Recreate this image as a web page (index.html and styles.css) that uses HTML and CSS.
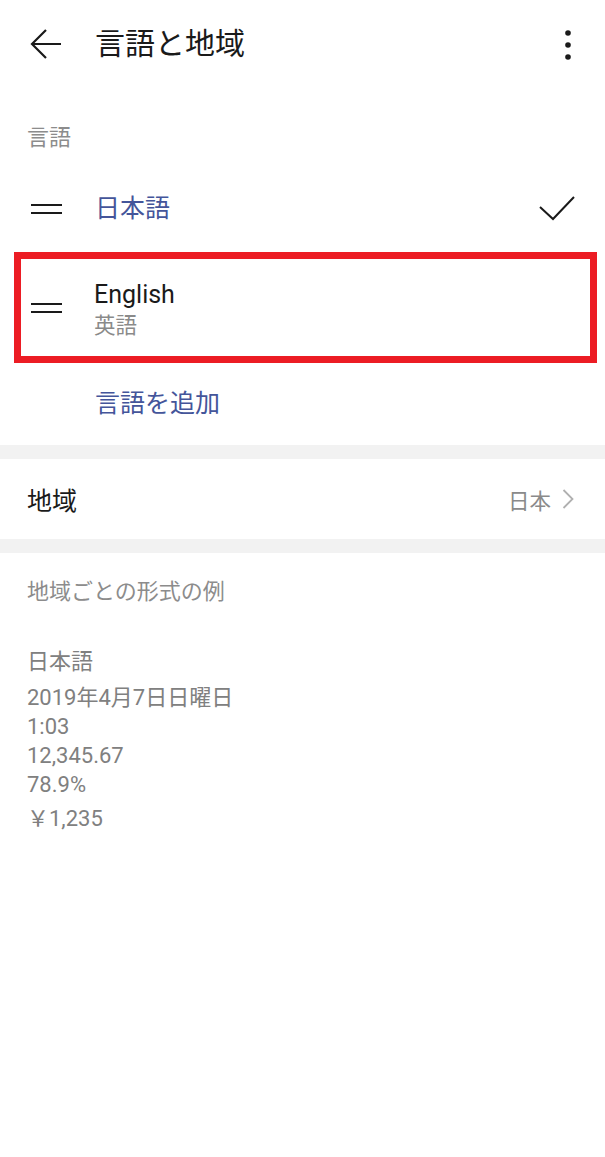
FILE: index.html
```html
<!DOCTYPE html>
<html lang="ja">
<head>
    <meta charset="UTF-8">
    <meta name="viewport" content="width=device-width, initial-scale=1.0">
    <title>言語と地域</title>
    <link rel="stylesheet" href="styles.css">
</head>
<body>
    <div class="screen">
        <!-- ヘッダー -->
        <header class="header">
            <svg class="back" width="32" height="32" viewBox="0 0 32 32">
                <path d="M16 2 L2 16 L16 30 M2 16 L31 16" fill="none" stroke="#1a1a1a" stroke-width="2.2"/>
            </svg>
            <h1>言語と地域</h1>
            <svg class="more" width="8" height="30" viewBox="0 0 8 30">
                <circle cx="4" cy="3" r="2.8" fill="#1a1a1a"/>
                <circle cx="4" cy="15" r="2.8" fill="#1a1a1a"/>
                <circle cx="4" cy="27" r="2.8" fill="#1a1a1a"/>
            </svg>
        </header>

        <!-- 言語 -->
        <section class="languages">
            <div class="section-label">言語</div>

            <div class="lang-row first">
                <span class="handle"></span>
                <div class="lang-text">
                    <div class="lang-name current">日本語</div>
                </div>
                <svg class="check" width="36" height="26" viewBox="0 0 36 26">
                    <path d="M1 12 L14 24 L35 2" fill="none" stroke="#1a1a1a" stroke-width="2"/>
                </svg>
            </div>

            <div class="lang-row highlighted">
                <span class="handle"></span>
                <div class="lang-text two-line">
                    <div class="lang-name">English</div>
                    <div class="lang-sub">英語</div>
                </div>
            </div>

            <div class="add-lang">言語を追加</div>
        </section>

        <div class="divider"></div>

        <!-- 地域 -->
        <div class="region-row">
            <span class="region-title">地域</span>
            <span class="region-value">日本</span>
            <svg class="chevron" width="12" height="20" viewBox="0 0 12 20">
                <path d="M1.5 1 L10.5 10 L1.5 19" fill="none" stroke="#b0b0b0" stroke-width="1.8"/>
            </svg>
        </div>

        <div class="divider"></div>

        <!-- 形式の例 -->
        <section class="examples">
            <div class="section-label">地域ごとの形式の例</div>
            <div class="example-list">
                <div class="ex first">日本語</div>
                <div class="ex date">2019年4月7日日曜日</div>
                <div class="ex">1:03</div>
                <div class="ex">12,345.67</div>
                <div class="ex">78.9%</div>
                <div class="ex yen">￥1,235</div>
            </div>
        </section>
    </div>
</body>
</html>
```

FILE: styles.css
```css
/* 全体 */
body {
    margin: 0;
    background-color: #FFFFFF;
    font-family: 'Roboto', 'Noto Sans CJK JP', sans-serif;
    color: #1a1a1a;
}

.screen {
    width: 605px;
    min-height: 1157px;
}

/* ヘッダー */
.header {
    height: 88px;
    display: flex;
    align-items: center;
    padding: 0 33px 0 30px;
}

.header .back {
    margin-top: -1px;
}

.header h1 {
    margin: 0 0 0 33px;
    font-size: 30px;
    font-weight: 400;
    line-height: 1;
    flex: 1;
}

.header .more {
    margin-top: 1px;
}

/* セクション見出し */
.section-label {
    font-size: 22px;
    line-height: 30px;
    color: #8c8c8c;
    padding-left: 27px;
}

.languages .section-label {
    margin-top: 35px;
}

/* 言語の行 */
.lang-row {
    display: flex;
    align-items: center;
    height: 70px;
    padding: 0 30px 0 31px;
}

.lang-row.first {
    margin-top: 21px;
}

.handle {
    width: 31px;
    height: 10px;
    border-top: 2.5px solid #1a1a1a;
    border-bottom: 2.5px solid #1a1a1a;
    box-sizing: border-box;
    margin-right: 33px;
}

.lang-text {
    flex: 1;
}

.lang-name {
    font-size: 25px;
    line-height: 30px;
}

.lang-name.current {
    color: #44559a;
}

.check {
    margin-top: -2px;
}

.lang-row.highlighted {
    height: 97px;
    margin: 8px 8px 0 14px;
    padding-left: 10px;
    border: 7px solid #ec1c24;
}

.lang-row.highlighted .handle {
    margin-right: 32px;
}

.two-line {
    margin-top: 6px;
}

.lang-sub {
    font-size: 21.5px;
    line-height: 31px;
    color: #8a8a8a;
}

.add-lang {
    height: 82px;
    line-height: 82px;
    padding-left: 95px;
    font-size: 25px;
    color: #44559a;
}

/* 区切り */
.divider {
    height: 14px;
    background-color: #f2f2f2;
}

/* 地域 */
.region-row {
    height: 80px;
    display: flex;
    align-items: center;
    padding: 0 31px 0 27px;
}

.region-title {
    flex: 1;
    font-size: 25px;
}

.region-value {
    font-size: 21.5px;
    color: #8a8a8a;
    margin-right: 11px;
}

/* 形式の例 */
.examples .section-label {
    margin-top: 24px;
}

.example-list {
    padding-left: 27px;
    margin-top: 40px;
    color: #808080;
    font-size: 22px;
}

.ex {
    line-height: 29px;
}

.ex.first {
    line-height: 30px;
}

.ex.date {
    margin-top: 6px;
}

.ex.yen {
    margin-top: 5px;
}
```
